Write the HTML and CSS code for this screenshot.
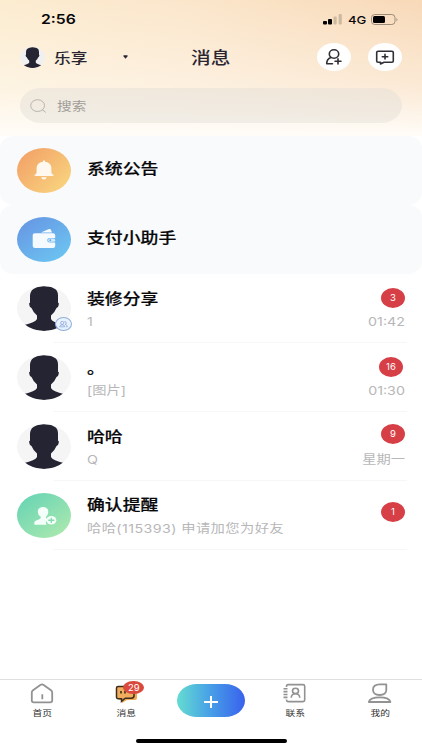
FILE: index.html
```html
<!DOCTYPE html>
<html lang="zh-CN">
<head>
<meta charset="utf-8">
<title>消息</title>
<link rel="stylesheet" href="styles.css">
</head>
<body>
<svg width="0" height="0" class="defs">
  <symbol id="person" viewBox="0 0 54 45" preserveAspectRatio="none">
    <path fill="#252432" d="M13 17Q11.8 16 12.3 19Q12.8 22 14.5 22Q16 26 20 29.5V33Q18.5 36.5 6.5 39.3Q14 45 27 45Q40 45 47.5 39.3Q35.5 36.5 34 33V29.5Q38 26 39.5 22Q41.2 22 41.7 19Q42.2 16 41 17V9.5Q41 4 37 2.6Q34 0 25.5 .3Q13 1.5 13 10Z"/>
  </symbol>
</svg>
<div class="app">
  <header class="top">
    <div class="status">
      <span class="clock wide">2:56</span>
      <div class="signals">
        <svg class="bars" viewBox="0 0 19 11"><rect x="0" y="7" width="4" height="3.5" rx="1"/><rect x="5" y="5" width="4" height="5.5" rx="1"/><g fill="#cdb9a0"><rect x="10.5" y="2.5" width="3.2" height="8" rx="1"/><rect x="15.6" y="0" width="3.2" height="10.5" rx="1"/></g></svg>
        <span class="net wide">4G</span>
        <svg class="battery" viewBox="0 0 28 11"><rect x=".5" y=".5" width="23.5" height="10" rx="3.2" fill="none" stroke="#9d8c79"/><rect x="2" y="2" width="12" height="7" rx="1.5"/><path d="M25.5 3.5q1.8 2 0 4z" fill="#9d8c79"/></svg>
      </div>
    </div>
    <div class="bar">
      <div class="me"><svg><use href="#person"/></svg></div>
      <span class="nick wide">乐享</span>
      <svg class="caret" viewBox="0 0 5 4"><path d="M.2 1Q.2.2 1.2.2H3.8Q4.8.2 4.8 1L2.5 3.8Z" fill="#292632"/></svg>
      <h1 class="title wide">消息</h1>
      <div class="round first"><svg viewBox="0 0 34 28"><g fill="none" stroke="#302f35" stroke-width="1.6" stroke-linecap="round" stroke-linejoin="round"><ellipse cx="17" cy="11" rx="4.7" ry="4.2"/><path d="M14 14.5C11 15.5 9.7 17.5 9.7 20.7H15.5M18 18.3H24M21 15.7V21"/></g></svg></div>
      <div class="round"><svg viewBox="0 0 34 28"><g fill="none" stroke="#302f35" stroke-width="1.6" stroke-linecap="round" stroke-linejoin="round"><path d="M10 8.2H24Q25.3 8.2 25.3 9.4V18Q25.3 19.2 24 19.2H16L12.5 21V19.2H10Q8.7 19.2 8.7 18V9.4Q8.7 8.2 10 8.2ZM14.3 13.7H19.7M17 11.4V16"/></g></svg></div>
    </div>
    <div class="search">
      <svg viewBox="0 0 17 14"><g fill="none" stroke="#b9b4ac" stroke-width="1"><ellipse cx="7.6" cy="6.6" rx="6.9" ry="5.9"/><path d="M12.2 10.6L15.5 13.2" stroke-linecap="round"/></g></svg>
      <span class="wide">搜索</span>
    </div>
  </header>

  <main class="list">
    <section class="row card">
      <div class="avatar orange"><svg viewBox="0 0 54 45"><path fill="#fff8ee" d="M25.8 13.8Q25.8 12.2 27 12.2T28.2 13.8Q34.4 15 34.4 20V24.5Q34.4 26 36 26.6Q37.5 28 35.5 28H18.5Q16.5 28 18 26.6Q19.6 26 19.6 24.5V20Q19.6 15 25.8 13.8ZM24 29.3H29.7Q29 31.5 27 31.5T24 29.3Z"/></svg></div>
      <div class="body"><h2 class="wide">系统公告</h2></div>
    </section>
    <section class="row card">
      <div class="avatar blue"><svg viewBox="0 0 54 45"><path fill="#f5faff" d="M24 15.5L32 12Q33.5 11.5 34 13L35 15.5ZM18 16.3H36Q38.2 16.3 38.2 18.2V21H33Q30.3 21 30.3 23.2T33 25.4H38.2V29Q38.2 31 36 31H18Q15.7 31 15.7 29V18Q15.7 16.3 18 16.3Z"/><rect x="31.2" y="21.6" width="7" height="3.2" rx="1.6" fill="#d5eafd"/><circle cx="33.3" cy="23.2" r=".9" fill="#58a5e6"/></svg></div>
      <div class="body"><h2 class="wide">支付小助手</h2></div>
    </section>
    <section class="row">
      <div class="avatar grey"><svg><use href="#person"/></svg>
        <div class="group"><svg viewBox="0 0 16 14"><g fill="none" stroke="#7f9bd0" stroke-width=".8"><ellipse cx="6.5" cy="5.7" rx="1.9" ry="1.8"/><path d="M3.5 10.3Q3.5 8 6.5 8T9.5 10.3ZM9 4.1Q11.6 4 11.2 6.1Q11 7.3 9.8 7.4Q12.5 7.8 12.5 10.3H10.8"/></g></svg></div>
      </div>
      <div class="body"><h2 class="wide">装修分享</h2><p class="wide">1</p></div>
      <div class="meta"><span class="badge">3</span><time>01:42</time></div>
    </section>
    <section class="row">
      <div class="avatar grey"><svg><use href="#person"/></svg></div>
      <div class="body"><h2 class="wide">。</h2><p class="wide">[图片]</p></div>
      <div class="meta two"><span class="badge">16</span><time>01:30</time></div>
    </section>
    <section class="row">
      <div class="avatar grey"><svg><use href="#person"/></svg></div>
      <div class="body"><h2 class="wide">哈哈</h2><p class="wide">Q</p></div>
      <div class="meta week"><span class="badge">9</span><time>星期一</time></div>
    </section>
    <section class="row">
      <div class="avatar green"><svg viewBox="0 0 54 45"><path fill="#f5fff9" d="M26 14C29.2 14 31.3 16 31.3 18.7C31.3 21 30.2 22.7 28.9 23.8V25L30.8 26Q27.4 29 29.8 31.8H18.5Q17 31.8 17.2 29.8Q17.4 27.8 20.5 27Q23.7 26.2 23.7 25V23.8Q20.8 21.8 20.8 18.7C20.8 16 22.9 14 26 14Z"/><ellipse cx="34.3" cy="27.3" rx="5" ry="4.3" fill="#f5fff9"/><path d="M31.2 27.3H37.4M34.3 24.7V29.9" stroke="#82dcb4" stroke-width="1.4"/></svg></div>
      <div class="body"><h2 class="wide">确认提醒</h2><p class="wide request">哈哈(115393) 申请加您为好友</p></div>
      <div class="meta solo"><span class="badge">1</span></div>
    </section>
  </main>

  <nav class="tabs">
    <div class="tab"><svg viewBox="0 0 24 22"><path d="M2.7 7.5L10.3 2Q12 .9 13.7 2L21.3 7.5Q22.2 8.2 22.2 9.5V17.6Q22.2 19.4 20 19.4H4Q1.8 19.4 1.8 17.6V9.5Q1.8 8.2 2.7 7.5ZM12.3 11.2V16.2" fill="none" stroke="#929292" stroke-width="1.8"/></svg><span>首页</span></div>
    <div class="tab"><svg viewBox="0 0 24 22"><path d="M5 5H20Q22 5 22 7V15Q22 17 20 17H12L7 20V17Q3 17 3 15V7Q3 5 5 5Z" fill="#f1a958"/><path d="M9 16.2L6.5 18.4V15.7H3.2Q1.5 15.7 1.5 14V5Q1.5 3.5 3.2 3.5H17.5Q19 3.5 19 5V13Q19 15.2 16 15.2H10.5Z" fill="#f1ad5e" stroke="#3c2d1c" stroke-width="1.5"/><path d="M6 8V10.5M10 8V10.5" stroke="#3c2d1c" stroke-width="1.6"/></svg><span>消息</span><b class="count">29</b></div>
    <div class="tab"><div class="add"><svg viewBox="0 0 14 12"><path d="M0 6H14M7 0V12" stroke="#fff" stroke-width="2"/></svg></div></div>
    <div class="tab"><svg viewBox="0 0 24 22"><g fill="none" stroke="#929292" stroke-width="1.6"><path d="M3.5 4V3.2Q3.5 1.6 5 1.6H20Q21.7 1.6 21.7 3.2V17Q21.7 18.6 20 18.6H5Q3.5 18.6 3.5 17V16.5M.5 5.7H4.5M.5 8.6H4.5M.5 11.5H4.5M.5 14.4H4.5"/><ellipse cx="12.5" cy="7.9" rx="3" ry="2.6"/><path d="M8.2 14.8Q8.5 10.8 12.5 10.8T16.8 14.8"/></g></svg><span>联系</span></div>
    <div class="tab"><svg viewBox="0 0 24 22"><path d="M11.7 1.4H18.3V6.8Q18.3 12 11.7 12Q5 12 5 6.8Q5 1.4 11.7 1.4ZM.8 19Q2 14.4 11.7 14.4T22.4 19Z" fill="none" stroke="#929292" stroke-width="1.8" stroke-linejoin="round"/></svg><span>我的</span></div>
  </nav>
  <div class="home"></div>
</div>
</body>
</html>
```
FILE: styles.css
```css
* { box-sizing: border-box; margin: 0; padding: 0; }
body { width: 422px; height: 750px; overflow: hidden; background: #fff; color: #08080a; font-family: Inter, "Noto Sans CJK SC", sans-serif; }
svg { display: block; }
.defs { position: absolute; }
.app { height: 750px; display: flex; flex-direction: column; }
/* Lettering is set slightly extended throughout */
.wide { display: inline-block; white-space: nowrap; transform: scaleX(1.19); transform-origin: left center; }

.top { height: 136px; background: linear-gradient(180deg, rgba(255,253,249,0) 0%, rgba(255,251,245,.5) 65%, #fffcf8 100%), linear-gradient(90deg, #fcecd0 0%, #fbe6cb 45%, #f8d9b8 100%); }
.status { height: 38px; padding: 1px 23px 0 41px; display: flex; justify-content: space-between; align-items: center; }
.clock { font-size: 12.8px; font-weight: 600; line-height: 16px; transform: scaleX(1.23); }
.signals { display: flex; align-items: center; }
.bars { width: 19px; height: 11px; }
.net { width: 18px; margin: 0 5px 0 6px; font-size: 11px; font-weight: 500; }
.battery { width: 28px; height: 11px; }
.bar { height: 38px; padding: 0 20px; display: flex; align-items: center; }
.me { width: 25px; height: 21px; border-radius: 50%; background: #f1f0f1; overflow: hidden; }
.me svg { width: 25px; height: 21px; }
.nick { width: 69px; margin-left: 9px; font-size: 14px; font-weight: 500; color: #292632; line-height: 20px; padding-top: 1px; }
.caret { width: 5px; height: 4px; }
.title { width: 126px; margin-left: 63px; font-size: 16.5px; font-weight: 500; color: #292632; line-height: 22px; padding-top: 1px; }
.round { flex: none; width: 34px; height: 28px; border-radius: 50%; background: #fff; }
.round.first { margin-right: 17px; }
.search { height: 35px; margin: 12px 20px 0; padding-left: 10px; border-radius: 21px / 17.5px; background: rgba(226,222,216,.45); display: flex; align-items: center; color: #a09d98; font-size: 12.3px; }
.search svg { width: 17px; height: 14px; margin-right: 10px; }

.list { height: 543px; }
.row { position: relative; height: 69px; padding: 0 17px; display: flex; align-items: center; }
.row:not(.card)::after { content: ""; position: absolute; left: 53px; right: 15px; bottom: 0; height: 1px; background: #f7f7f7; }
.card { background: #f9fafc; border-radius: 14px / 12px; }
.avatar { position: relative; flex: none; width: 54px; height: 45px; margin-bottom: 1px; border-radius: 50%; }
.avatar > svg { width: 54px; height: 45px; border-radius: 50%; }
.orange { background: linear-gradient(135deg, #f3a368 10%, #f8d37e 90%); }
.blue { background: linear-gradient(145deg, #6798e4 10%, #6cc4f1 90%); }
.green { background: linear-gradient(145deg, #6ed6b4 15%, #a9e8ae 90%); }
.grey { background: #f5f5f5; }
.group { position: absolute; right: -1px; bottom: 0; width: 17px; height: 14px; border: 1px solid #8eaedb; border-radius: 50%; background: #e9f3ff; }
.group svg { width: 15px; height: 12px; }
.body { flex: 1; height: 69px; margin-left: 16px; padding-top: 14px; }
.card .body { padding-top: 22px; }
.body h2 { display: table; font-size: 15px; font-weight: 500; line-height: 22px; -webkit-text-stroke: .2px currentColor; }
.body p { display: table; margin-top: 3px; font-size: 12px; line-height: 18px; color: #b7b7b9; }
.row:last-child .body { padding-top: 13px; }
.row:last-child p { margin-top: 4px; }
.body .request { letter-spacing: .34px; }
.meta { height: 69px; padding-top: 14px; display: flex; flex-direction: column; align-items: flex-end; }
.badge { width: 24px; height: 20px; border-radius: 50%; background: #d63f46; color: #fff; font-size: 9.5px; line-height: 20px; text-align: center; }
.two .badge { margin-right: 2px; }
.week { padding-top: 12px; }
.week time { margin-top: 7px; }
.solo { padding-top: 21px; }
.meta time { margin-top: 5px; font-size: 12px; line-height: 18px; color: #b7b7b9; white-space: nowrap; transform: scaleX(1.19); transform-origin: right center; }
.meta.week time { margin-top: 7px; }

.tabs { height: 54px; border-top: 1px solid #e0e0e0; display: grid; grid-template-columns: repeat(5, 1fr); }
.tab { position: relative; display: flex; flex-direction: column; align-items: center; padding-top: 3px; }
.tab > svg { width: 24px; height: 22px; }
.tab span { margin-top: 2px; font-size: 8.2px; line-height: 13px; color: #303030; transform: scaleX(1.19); }
.count { position: absolute; left: 39px; top: 1px; width: 21px; height: 13px; border-radius: 10px / 6.5px; background: #da493e; color: #fff; font-size: 9.5px; font-weight: 400; line-height: 13px; text-align: center; }
.add { width: 68px; height: 33px; margin-top: 1px; border-radius: 20px / 16.5px; background: linear-gradient(90deg, #64dcd2 0%, #479ee7 50%, #3961ed 100%); display: flex; justify-content: center; align-items: center; padding-top: 3px; }
.add svg { width: 14px; height: 12px; }
.home { width: 151px; height: 4px; margin: 6px auto 0; border-radius: 2px; background: #000; }
```
